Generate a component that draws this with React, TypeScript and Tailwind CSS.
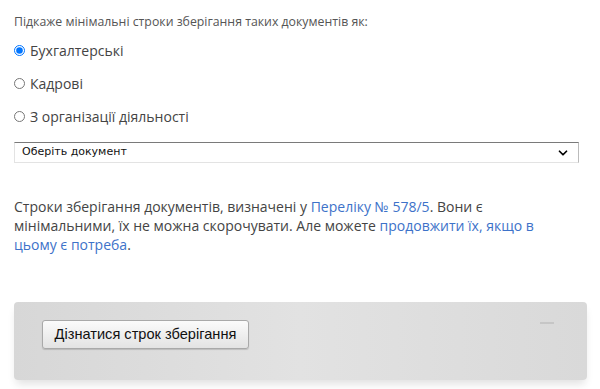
import { ChevronDown } from "lucide-react"

const options = ["Бухгалтерські", "Кадрові", "З організації діяльності"]

export default function App() {
  return (
    <main className="h-[389px] w-[600px] overflow-hidden bg-white font-['Open_Sans',sans-serif] text-[#444]">
      <div className="px-[14px] pt-[13px]">
        <p className="text-[12.3px] leading-[18px] text-[#555]">Підкаже мінімальні строки зберігання таких документів як:</p>

        <div className="mt-[9px] flex flex-col gap-[13px]">
          {options.map((label, i) => (
            <label key={label} className="flex h-[20px] items-center gap-[5px] text-[14px]">
              <input
                type="radio"
                name="doc"
                defaultChecked={i === 0}
                className="m-0 h-[11px] w-[11px] accent-[#0075ff]"
              />
              <span>{label}</span>
            </label>
          ))}
        </div>

        <div className="mt-[16px] flex h-[21px] w-[565px] items-center justify-between border border-[#e3e3e3] border-t-[#7a7a7a] border-r-[#bbb] bg-white pl-[7px] pr-[8px]">
          <span className="font-['DejaVu_Sans',sans-serif] text-[11px] text-[#111]">Оберіть документ</span>
          <ChevronDown className="h-[14px] w-[14px] text-black" strokeWidth={3} />
        </div>

        <p className="mt-[34px] w-[540px] text-[14px] leading-[19px] text-[#444]">
          Строки зберігання документів, визначені у <a className="text-[#3d72c9]">Переліку № 578/5</a>. Вони є мінімальними, їх не можна скорочувати. Але можете{" "}
          <a className="text-[#3d72c9]">продовжити їх, якщо в цьому є потреба</a>.
        </p>

        <section className="relative mt-[48px] h-[78px] w-[573px] rounded-[4px] bg-gradient-to-r from-[#d7d7d7] via-[#e2e2e2] to-[#d9d9d9] px-[28px] pt-[18px] shadow-[0_6px_8px_-2px_rgba(0,0,0,0.12)]">
          <button className="h-[29px] w-[207px] rounded-[3px] border border-[#a9a9a9] bg-gradient-to-b from-[#fbfbfb] to-[#e3e3e3] font-['Liberation_Sans',sans-serif] text-[14.6px] text-[#111] shadow-[0_1px_1px_rgba(0,0,0,0.15)]">
            Дізнатися строк зберігання
          </button>
          <span className="absolute right-[33px] top-[20px] h-[2px] w-[14px] bg-[#c6c6c6]" />
        </section>
      </div>
    </main>
  )
}
